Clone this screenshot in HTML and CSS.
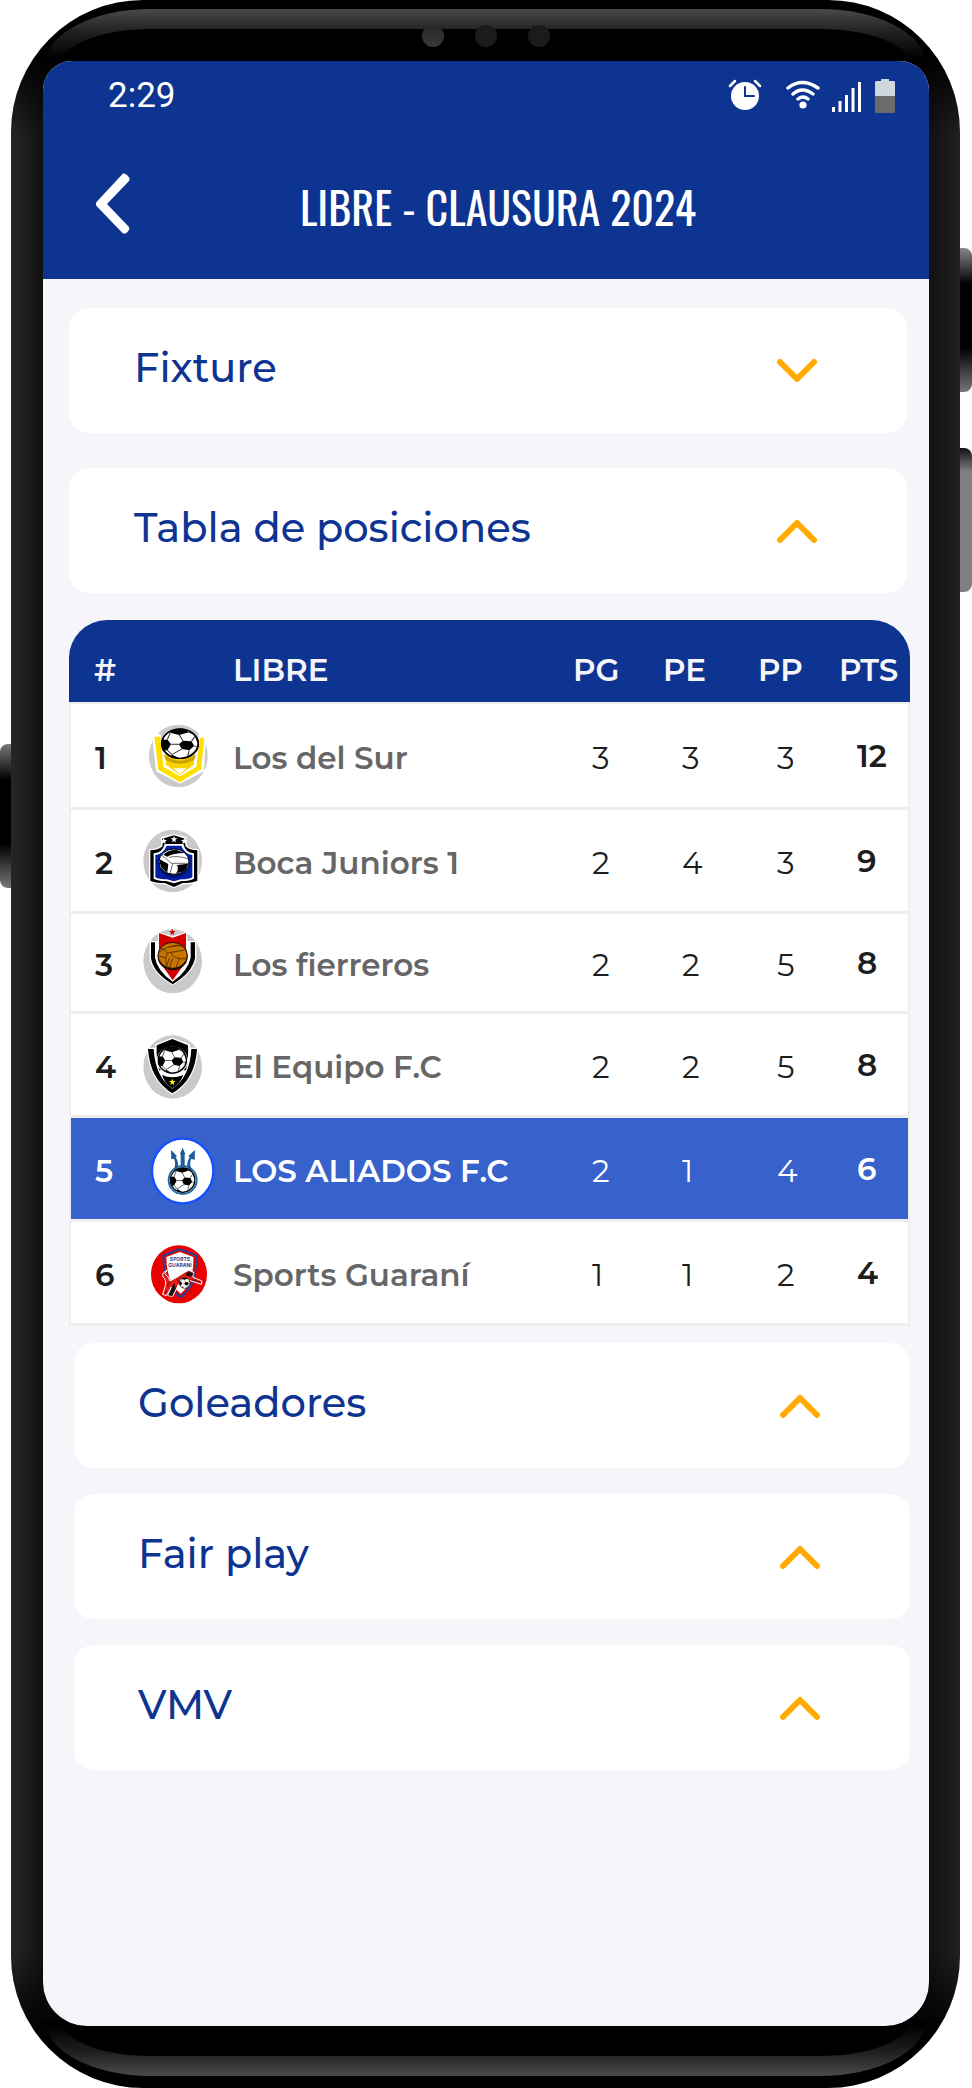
FILE: index.html
```html
<!DOCTYPE html>
<html lang="es">
<head>
<meta charset="utf-8">
<meta name="viewport" content="width=device-width, initial-scale=1">
<title>Libre - Clausura 2024</title>
<link rel="stylesheet" href="styles.css">
</head>
<body>
<svg class="defs" aria-hidden="true">
  <defs>
    <symbol id="up" viewBox="0 0 42 28"><path d="M4 23 21 6 38 23" fill="none" stroke="#ffa901" stroke-width="6" stroke-linecap="round" stroke-linejoin="round"/></symbol>
    <symbol id="down" viewBox="0 0 42 28"><path d="M4 5 21 22 38 5" fill="none" stroke="#ffa901" stroke-width="6" stroke-linecap="round" stroke-linejoin="round"/></symbol>
    <clipPath id="ballclip"><circle r="50"/></clipPath>
    <symbol id="ball" viewBox="-52 -52 104 104" preserveAspectRatio="none">
      <circle r="50" fill="#fff"/>
      <g clip-path="url(#ballclip)">
        <path d="M-3 2 8-10 31-8 38 8 25 22 5 18ZM-27-50 12-52 24-38-2-29-26-36ZM-56-12-34-14-24 2-34 22-56 24ZM38-32 52-30 56-4 46-6ZM-22 36-2 48 20 44 24 60-26 60Z" fill="#000"/>
        <path d="M-3 2-24 2M8-10-2-29M31-8 40-24M25 22 20 44M38 8 48 10M5 18-22 36-34 22M-34-14-26-36M24-38 38-32M20 44 42 28" fill="none" stroke="#333" stroke-width="3"/>
        <path d="M48-20Q50 30 0 48 70 58 60-30Z" fill="#999" opacity=".45"/>
      </g>
      <circle r="49" fill="none" stroke="#000" stroke-width="5"/>
    </symbol>
    <path id="star" d="M0-10 3-3 10-3 4 2 6 9 0 5-6 9-4 2-10-3-3-3Z"/>
  </defs>
</svg>

<div class="device">
  <span class="side side-left"></span>
  <span class="side side-power"></span>
  <span class="side side-volume"></span>
  <div class="phone">
    <span class="shine shine-top"></span>
    <span class="shine shine-bottom"></span>
    <div class="cameras"><i class="lens lens-main"></i><i class="lens"></i><i class="lens"></i></div>

    <main class="screen">
      <header class="topbar">
        <div class="status">
          <time>2:29</time>
          <svg class="status-icons" viewBox="0 0 168 36" role="img" aria-label="Alarma, wifi, señal y batería">
            <circle cx="17" cy="18" r="14" fill="#fff"/>
            <path d="M17 9v9h9" fill="none" stroke="#0e3492" stroke-width="2" stroke-linecap="round"/>
            <path d="M2 8 7 3M27 3l5 5" stroke="#fff" stroke-width="2.5" stroke-linecap="round"/>
            <path d="M60 10Q74-1 90 10M65 16Q74 8 85 16M70 21Q75 17 80 21" fill="none" stroke="#fff" stroke-width="3.4" stroke-linecap="round"/>
            <circle cx="75" cy="27" r="3.6" fill="#fff"/>
            <path d="M105.500 29v5M112 23v11M118.500 17v17M125 10v24M131.500 4v30" stroke="#fff" stroke-width="3"/>
            <path d="M147 18V4q0-1 2-1h4V1h8v2h4q2 0 2 1v14Z" fill="#cfd8dd"/>
            <path d="M147 18h20v16q0 1-1 1h-18q-1 0-1-1Z" fill="#6b6b6b"/>
          </svg>
        </div>
        <div class="titlebar">
          <button class="back" type="button" aria-label="Volver"><svg viewBox="0 0 36 62"><path d="M28 0.500Q30 0 32 2L34.500 5Q35 7 33.500 8.500L12 31 33.500 53.500Q35 55 34 57L32 59.500Q30 61.500 27.500 60L1.500 33Q0 31 1.500 29Z" fill="#fff"/></svg></button>
          <h1>LIBRE - CLAUSURA 2024</h1>
        </div>
      </header>

      <section class="group group-upper">
        <button class="card" type="button" aria-expanded="false"><span>Fixture</span><svg><use href="#down"/></svg></button>
        <button class="card" type="button" aria-expanded="true"><span>Tabla de posiciones</span><svg><use href="#up"/></svg></button>
      </section>

      <table class="standings">
        <colgroup><col class="c-pos"><col class="c-badge"><col><col class="c-pg"><col class="c-pe"><col class="c-pp"><col class="c-pts"></colgroup>
        <thead>
          <tr><th class="pos">#</th><th></th><th>LIBRE</th><th>PG</th><th>PE</th><th>PP</th><th>PTS</th></tr>
        </thead>
        <tbody>
          <tr class="leader">
            <td class="pos">1</td>
            <td><svg class="badge" viewBox="30 46 240 240">
              <ellipse cx="145" cy="166" rx="88" ry="94" fill="#cacaca"/>
              <path d="M66 100 92 100 97 150 203 150 206 100 228 102 222 212 150 249 78 212Z" fill="#fff"/>
              <path d="M73 108h18l9 90 50 29 49-29 10-82 7-8 7 10-10 88-63 39-65-38Z" fill="#ffde00"/>
              <path d="M108 150h84v42l-43 31-41-31Z" fill="#fad200"/>
              <path d="M100 160q50 40 100 0l-8 18q-42 22-84 0Z" fill="#c9a400"/>
              <path d="M130 203h40l-21 18Z" fill="#fff"/>
              <use href="#ball" x="92" y="82" width="116" height="94"/>
            </svg></td>
            <th scope="row">Los del Sur</th><td>3</td><td>3</td><td>3</td><td class="pts">12</td>
          </tr>
          <tr>
            <td class="pos">2</td>
            <td><svg class="badge" viewBox="30 361 240 240">
              <ellipse cx="128" cy="481" rx="88" ry="94" fill="#cacaca"/>
              <path d="M132 400 170 410 170 436Q180 446 206 446V543Q190 551 160 551L132 562 102 551Q72 551 57 543V446Q82 446 94 434L92 410Z" fill="#fff"/>
              <path d="M132 404 166 414 166 436Q178 449 202 449V540Q188 547 158 547L132 559 104 547Q74 547 61 540V449Q84 449 98 436L96 414Z" fill="#000"/>
              <path d="M104 430H160Q166 456 192 458V534Q178 541 155 541L132 548 108 541Q84 541 71 534V458Q98 456 104 430Z" fill="#fff"/>
              <path d="M110 435H154Q164 460 187 463V530Q176 536 153 536L132 542 110 536Q88 536 76 530V463Q100 460 110 435Z" fill="#001fa5"/>
              <ellipse cx="132" cy="490" rx="46" ry="42" fill="#00126c"/>
              <ellipse cx="132" cy="483" rx="45" ry="38" fill="#fff" stroke="#000" stroke-width="3"/>
              <path d="M100 462Q114 447 140 448L164 457Q130 457 112 468ZM89 476 115 490 112 515Q86 500 89 476ZM134 494 174 489Q172 505 155 514L138 518Q146 510 142 494Z" fill="#000"/>
              <path d="M96 464 124 488 176 488M118 470Q140 464 174 474M128 490 120 518" fill="none" stroke="#222" stroke-width="2"/>
              <g fill="#fff"><use href="#star" x="101" y="421"/><use href="#star" x="132" y="416"/><use href="#star" x="163" y="421"/></g>
            </svg></td>
            <th scope="row">Boca Juniors 1</th><td>2</td><td>4</td><td>3</td><td class="pts">9</td>
          </tr>
          <tr class="compact">
            <td class="pos">3</td>
            <td><svg class="badge" viewBox="30 38 240 240">
              <ellipse cx="128" cy="153" rx="88" ry="96" fill="#cacaca"/>
              <path d="M84 64 128 78 172 64V92H199V145Q190 188 128 225 66 188 59 145V92H84Z" fill="#fff"/>
              <path d="M63 96H75V142Q82 182 128 214 174 182 182 142V96H195V144Q186 188 128 222 70 188 63 144Z" fill="#000"/>
              <path d="M87 68 128 82 168 68V150L128 212 87 150Z" fill="#d40000"/>
              <path d="M87 150 128 214 168 150 160 168H98Z" fill="#fff"/>
              <path d="M98 168H158L128 210Z" fill="#d40000"/>
              <use href="#star" x="127" y="65" fill="#d40000"/>
              <ellipse cx="128" cy="139" rx="45" ry="41" fill="#200"/>
              <ellipse cx="128" cy="135" rx="44" ry="39" fill="#c87400" stroke="#1c0d00" stroke-width="3"/>
              <path d="M86 126Q120 100 160 108M92 112Q106 116 112 128L170 118M112 128Q102 146 112 172M124 127Q124 146 172 146M119 143 108 170M86 137 106 142M148 145 138 172M118 110 158 102M128 145 118 173" fill="none" stroke="#4d2b00" stroke-width="2.500"/>
            </svg></td>
            <th scope="row">Los fierreros</th><td>2</td><td>2</td><td>5</td><td class="pts">8</td>
          </tr>
          <tr>
            <td class="pos">4</td>
            <td><svg class="badge" viewBox="30 344 240 240">
              <ellipse cx="128" cy="470" rx="88" ry="95" fill="#cacaca"/>
              <path d="M127 382 180 402V412H205Q202 508 127 553 54 508 50 412H76V402Z" fill="#fff"/>
              <path d="M54 416H71Q76 500 127 535 180 500 184 416H201Q196 508 127 549 60 508 54 416Z" fill="#000"/>
              <path d="M127 386 174 405Q176 450 168 480H88Q78 450 80 405Z" fill="#000"/>
              <path d="M96 494Q127 508 160 494 150 520 127 534 104 520 96 494Z" fill="#000"/>
              <ellipse cx="127" cy="451" rx="47" ry="42" fill="#fff"/>
              <use href="#ball" x="82" y="407" width="90" height="84"/>
              <use href="#star" x="127" y="515" fill="#ffee00"/>
            </svg></td>
            <th scope="row">El Equipo F.C</th><td>2</td><td>2</td><td>5</td><td class="pts">8</td>
          </tr>
          <tr class="own">
            <td class="pos">5</td>
            <td><svg class="badge" viewBox="30 57 240 240">
              <ellipse cx="158" cy="183" rx="92" ry="97" fill="#fff" stroke="#1450ff" stroke-width="7"/>
              <circle cx="158" cy="210" r="42" fill="#fff" stroke="#1f6cab" stroke-width="6"/>
              <path d="M152 168V132H150L158 113 166 132H164V168ZM130 184Q140 160 132 146L124 148 123 120 141 138 137 142Q148 158 142 176ZM186 184Q176 160 184 146L194 150 195 120 175 138 179 142Q168 158 174 176Z" fill="#1d5c98"/>
              <use href="#ball" x="119" y="171" width="78" height="78"/>
            </svg></td>
            <th scope="row">LOS ALIADOS F.C</th><td>2</td><td>1</td><td>4</td><td class="pts">6</td>
          </tr>
          <tr>
            <td class="pos">6</td>
            <td><svg class="badge" viewBox="30 368 240 240">
              <ellipse cx="147" cy="492" rx="84" ry="87" fill="#eb0000"/>
              <path d="M149 413 202 433Q204 530 152 564 98 530 97 433Z" fill="#29408f"/>
              <path d="M149 420 196 438Q198 524 152 556 104 524 103 438Z" fill="#e80000"/>
              <path d="M149 425 190 440Q192 520 152 550 110 520 109 440Z" fill="#fff"/>
              <text x="150" y="452" class="crest-text">SPORTS</text>
              <text x="150" y="470" class="crest-text">GUARANÍ</text>
              <path d="M112 480Q94 486 99 500 110 508 106 526L98 552 110 556 124 530 114 556 128 558 146 522 166 506 214 522 216 512 188 500 192 486 176 480 164 486 138 502 120 512Q114 494 104 490Z" fill="#e21b1b" stroke="#fff" stroke-width="3"/>
              <path d="M174 484 190 492 180 498 168 494ZM184 508 212 516M112 528 120 512M110 540 104 552M132 520 116 554 126 556 136 534ZM100 492 106 498M140 506 146 514M152 502 156 510" fill="#111" stroke="#111" stroke-width="2"/>
              <use href="#ball" x="147" y="501" width="34" height="34"/>
            </svg></td>
            <th scope="row">Sports Guaraní</th><td>1</td><td>1</td><td>2</td><td class="pts">4</td>
          </tr>
        </tbody>
      </table>

      <section class="group group-lower">
        <button class="card" type="button"><span>Goleadores</span><svg><use href="#up"/></svg></button>
        <button class="card" type="button"><span>Fair play</span><svg><use href="#up"/></svg></button>
        <button class="card" type="button"><span>VMV</span><svg><use href="#up"/></svg></button>
      </section>
    </main>
  </div>
</div>
</body>
</html>
```
FILE: styles.css
```css
* { box-sizing: border-box; }

body {
  margin: 0;
  background: #fff;
  font-family: Montserrat, Inter, "Noto Sans", sans-serif;
  color: #1d1d1d;
}

.defs { position: absolute; width: 0; height: 0; }

/* Device frame */
.device {
  position: relative;
  display: flex;
  min-height: 100vh;
  padding: 0 12px 0 11px;
}

.phone {
  position: relative;
  display: flex;
  flex: 1;
  padding: 61px 31px 62px 32px;
  border-radius: 132px;
  background:
    linear-gradient(to bottom, #000 50px, transparent 135px, transparent calc(100% - 135px), #000 calc(100% - 50px)),
    linear-gradient(to right, #262626, #111 32px, #111 calc(100% - 31px), #202020);
}

.side { position: absolute; width: 20px; height: 144px; border-radius: 8px; }
.side-left { left: 0; top: 744px; background: linear-gradient(#777, #000 36px, #000 100px, #777); }
.side-power { right: 0; top: 248px; background: linear-gradient(#888, #000 36px, #000 100px, #777); }
.side-volume { right: 0; top: 448px; background: linear-gradient(#111, #808080 24px); }

.shine {
  position: absolute;
  left: 34px;
  right: 34px;
  height: 56px;
}
.shine::after {
  content: "";
  position: absolute;
  left: 16px;
  right: 16px;
  height: 36px;
  background: #000;
}
.shine-top { top: 9px; border-radius: 106px 106px 0 0 / 56px 56px 0 0; background: linear-gradient(#4a4a4a, #222 22px, #000 50px); }
.shine-top::after { bottom: 0; border-radius: 90px 90px 0 0 / 36px 36px 0 0; }
.shine-bottom { bottom: 12px; border-radius: 0 0 106px 106px / 0 0 56px 56px; background: linear-gradient(to top, #4a4a4a, #222 22px, #000 50px); }
.shine-bottom::after { top: 0; border-radius: 0 0 90px 90px / 0 0 36px 36px; }

.cameras {
  position: absolute;
  top: 25px;
  left: 0;
  right: 0;
  display: flex;
  justify-content: center;
  gap: 31px;
}
.lens { width: 22px; height: 22px; border-radius: 50%; background: #1b1b1b; }
.lens-main { background: linear-gradient(#262626, #3a3a3a); }

.screen {
  position: relative;
  flex: 1;
  min-width: 0;
  overflow: hidden;
  border-radius: 29px 29px 44px 44px;
  background: #f5f5fa;
}

/* Top bar */
.topbar { height: 218px; background: #0e3492; color: #fff; }

.status {
  display: flex;
  align-items: center;
  justify-content: space-between;
  padding: 16px 33px 0 65px;
  font: 35px/38px Roboto, sans-serif;
}
.status-icons { width: 168px; height: 36px; }

.titlebar {
  display: grid;
  grid-template-columns: 100px 1fr 76px;
  align-items: center;
  padding-top: 55px;
}
.back { align-self: start; width: 36px; height: 62px; margin: 3px 0 0 52px; padding: 0; border: 0; background: none; }
.back svg { display: block; width: 36px; height: 62px; }
h1 {
  margin: 0;
  text-align: center;
  font: 400 44px/74px Oswald, "Roboto Condensed", Roboto, sans-serif;
  white-space: nowrap;
}

/* Accordion cards */
.group { display: flex; flex-direction: column; }
.group-upper { gap: 35px; padding: 29px 22px 27px 26px; }
.group-lower { gap: 26px; padding: 17px 19px 27px 31px; }

.card {
  display: flex;
  align-items: center;
  justify-content: space-between;
  height: 125px;
  padding: 0 89px 0 65px;
  border: 0;
  border-radius: 20px;
  background: #fff;
  color: #0e3492;
  font: inherit;
  font-size: 40px;
  font-weight: 500;
}
.group-lower .card { padding-left: 64px; }
.card span { padding-bottom: 6px; }
.card svg { width: 42px; height: 28px; }

/* Standings */
.standings {
  width: calc(100% - 45px);
  margin-left: 26px;
  border-spacing: 0;
  table-layout: fixed;
  font-size: 31px;
  line-height: 36px;
}
.c-pos { width: 71px; }
.c-badge { width: 93px; }
.c-pg { width: 90px; }
.c-pe { width: 95px; }
.c-pp { width: 81px; }
.c-pts { width: 71px; }

.standings th, .standings td { padding: 0; text-align: left; white-space: nowrap; }

.standings thead th {
  height: 84px;
  padding-top: 18px;
  background: #0e3492;
  color: #f5f5fa;
  font-weight: 600;
  border-bottom: 2px solid #eee;
}
.standings thead th:first-child { border-top-left-radius: 38px; }
.standings thead th:last-child { border-top-right-radius: 38px; }

.standings tbody th, .standings tbody td {
  height: 104px;
  padding-top: 4px;
  border-bottom: 3px solid #eee;
  background: #fff;
}
.standings tbody .leader > * { height: 106px; }
.standings tbody .compact > * { height: 100px; }
.standings tbody td:first-child { border-left: 2px solid #eee; }
.standings tbody td:last-child { border-right: 2px solid #eee; }
.standings tbody th { color: #666; font-weight: 600; }
.standings tbody td { padding-left: 19px; font-weight: 400; }
.standings tbody td:nth-child(2) { padding: 0; }
.standings tbody .pts { padding: 0 0 0 18px; font-weight: 600; }
.standings thead .pos { padding-left: 25px; }
.standings tbody .pos { padding-left: 24px; font-weight: 600; }
.standings tbody .own th, .standings tbody .own td { background: #3761cb; color: #fff; }

.badge { display: block; width: 80px; height: 80px; }
.crest-text { fill: #29408f; font: 700 15px Inter, sans-serif; text-anchor: middle; }
```
